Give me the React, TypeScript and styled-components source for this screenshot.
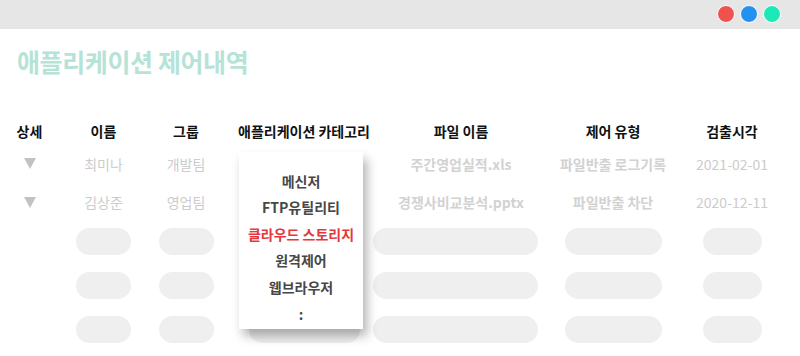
import React from "react";
import styled, { createGlobalStyle } from "styled-components";

const GlobalStyle = createGlobalStyle`
  html, body {
    margin: 0;
    padding: 0;
    background: #ffffff;
  }
  body {
    font-family: "Noto Sans CJK KR", "Noto Sans", sans-serif;
  }
`;

const COLUMNS = "59px 89px 76px 160px 154px 150px 88px 1fr";

const Window = styled.div`
  width: 800px;
  height: 356px;
  overflow: hidden;
  background: #ffffff;
  display: flex;
  flex-direction: column;
`;

const TitleBar = styled.div`
  height: 29px;
  background: #e6e6e6;
  display: flex;
  align-items: center;
  justify-content: flex-end;
  gap: 5px;
  padding-right: 19px;
  box-sizing: border-box;
`;

const Dot = styled.span<{ $color: string }>`
  width: 18px;
  height: 18px;
  border-radius: 50%;
  background: ${(p) => p.$color};
  box-sizing: border-box;
  border: 1px solid #ffffff;
`;

const Title = styled.h1`
  margin: 0;
  padding: 15px 0 0 17px;
  height: 86px;
  box-sizing: border-box;
  font-size: 25px;
  line-height: 34px;
  letter-spacing: -0.4px;
  font-weight: 700;
  color: #b6e3d7;
`;

const Row = styled.div<{ $height: number }>`
  display: grid;
  grid-template-columns: ${COLUMNS};
  height: ${(p) => p.$height}px;
  align-items: center;
`;

const SkeletonRow = styled.div`
  display: grid;
  grid-template-columns: ${COLUMNS};
  height: 44px;
  align-items: start;
  padding-top: 4px;
  box-sizing: border-box;
`;

const HeadCell = styled.div`
  position: relative;
  text-align: center;
  font-size: 14px;
  font-weight: 700;
  color: #111111;
  white-space: nowrap;
`;

const Cell = styled.div<{ $bold?: boolean }>`
  text-align: center;
  font-size: 14px;
  font-weight: ${(p) => (p.$bold ? 700 : 400)};
  color: ${(p) => (p.$bold ? "#d2d2d2" : "#cccccc")};
  white-space: nowrap;
  display: flex;
  justify-content: center;
`;

const Arrow = styled.span`
  width: 0;
  height: 0;
  border-left: 6.5px solid transparent;
  border-right: 6.5px solid transparent;
  border-top: 11px solid #c2c2c2;
`;

const Pill = styled.div<{ $width: number; $shift?: number }>`
  width: ${(p) => p.$width}px;
  height: 27px;
  border-radius: 14px;
  background: #efefef;
  justify-self: center;
  margin-right: ${(p) => (p.$shift ? p.$shift * 2 : 0)}px;
`;

const Menu = styled.ul`
  position: absolute;
  top: 31px;
  left: 15px;
  width: 124px;
  margin: 0;
  padding: 16px 0 2px;
  list-style: none;
  background: #ffffff;
  box-shadow: 4px 7px 10px rgba(0, 0, 0, 0.3);
  z-index: 2;
`;

const MenuItem = styled.li<{ $active?: boolean }>`
  height: 26.6px;
  line-height: 26.6px;
  text-align: center;
  font-size: 14px;
  font-weight: 700;
  color: ${(p) => (p.$active ? "#e5383d" : "#474747")};
`;

const headers = ["상세", "이름", "그룹", "애플리케이션 카테고리", "파일 이름", "제어 유형", "검출시각"];

const records = [
  { name: "최미나", group: "개발팀", file: "주간영업실적.xls", type: "파일반출 로그기록", date: "2021-02-01" },
  { name: "김상준", group: "영업팀", file: "경쟁사비교분석.pptx", type: "파일반출 차단", date: "2020-12-11" },
];

const categories = ["메신저", "FTP유틸리티", "클라우드 스토리지", "원격제어", "웹브라우저", ":"];

const App: React.FC = () => {
  return (
    <Window>
      <GlobalStyle />
      <TitleBar>
        <Dot $color="#ef5350" />
        <Dot $color="#2291ef" />
        <Dot $color="#1de9b6" />
      </TitleBar>
      <Title>애플리케이션 제어내역</Title>

      <Row $height={32}>
        {headers.map((h, i) => (
          <HeadCell key={h}>
            {h}
            {i === 3 && (
              <Menu>
                {categories.map((c) => (
                  <MenuItem key={c} $active={c === "클라우드 스토리지"}>
                    {c}
                  </MenuItem>
                ))}
              </Menu>
            )}
          </HeadCell>
        ))}
      </Row>

      {records.map((r, i) => (
        <Row key={r.name} $height={i === 0 ? 34 : 44}>
          <Cell>
            <Arrow />
          </Cell>
          <Cell>{r.name}</Cell>
          <Cell>{r.group}</Cell>
          <Cell />
          <Cell $bold>{r.file}</Cell>
          <Cell $bold>{r.type}</Cell>
          <Cell>{r.date}</Cell>
        </Row>
      ))}

      {[0, 1, 2].map((k) => (
        <SkeletonRow key={k}>
          <div />
          <Pill $width={55} />
          <Pill $width={55} />
          <Pill $width={111} />
          <Pill $width={165} $shift={6} />
          <Pill $width={97} />
          <Pill $width={59} />
        </SkeletonRow>
      ))}
    </Window>
  );
};

export default App;
